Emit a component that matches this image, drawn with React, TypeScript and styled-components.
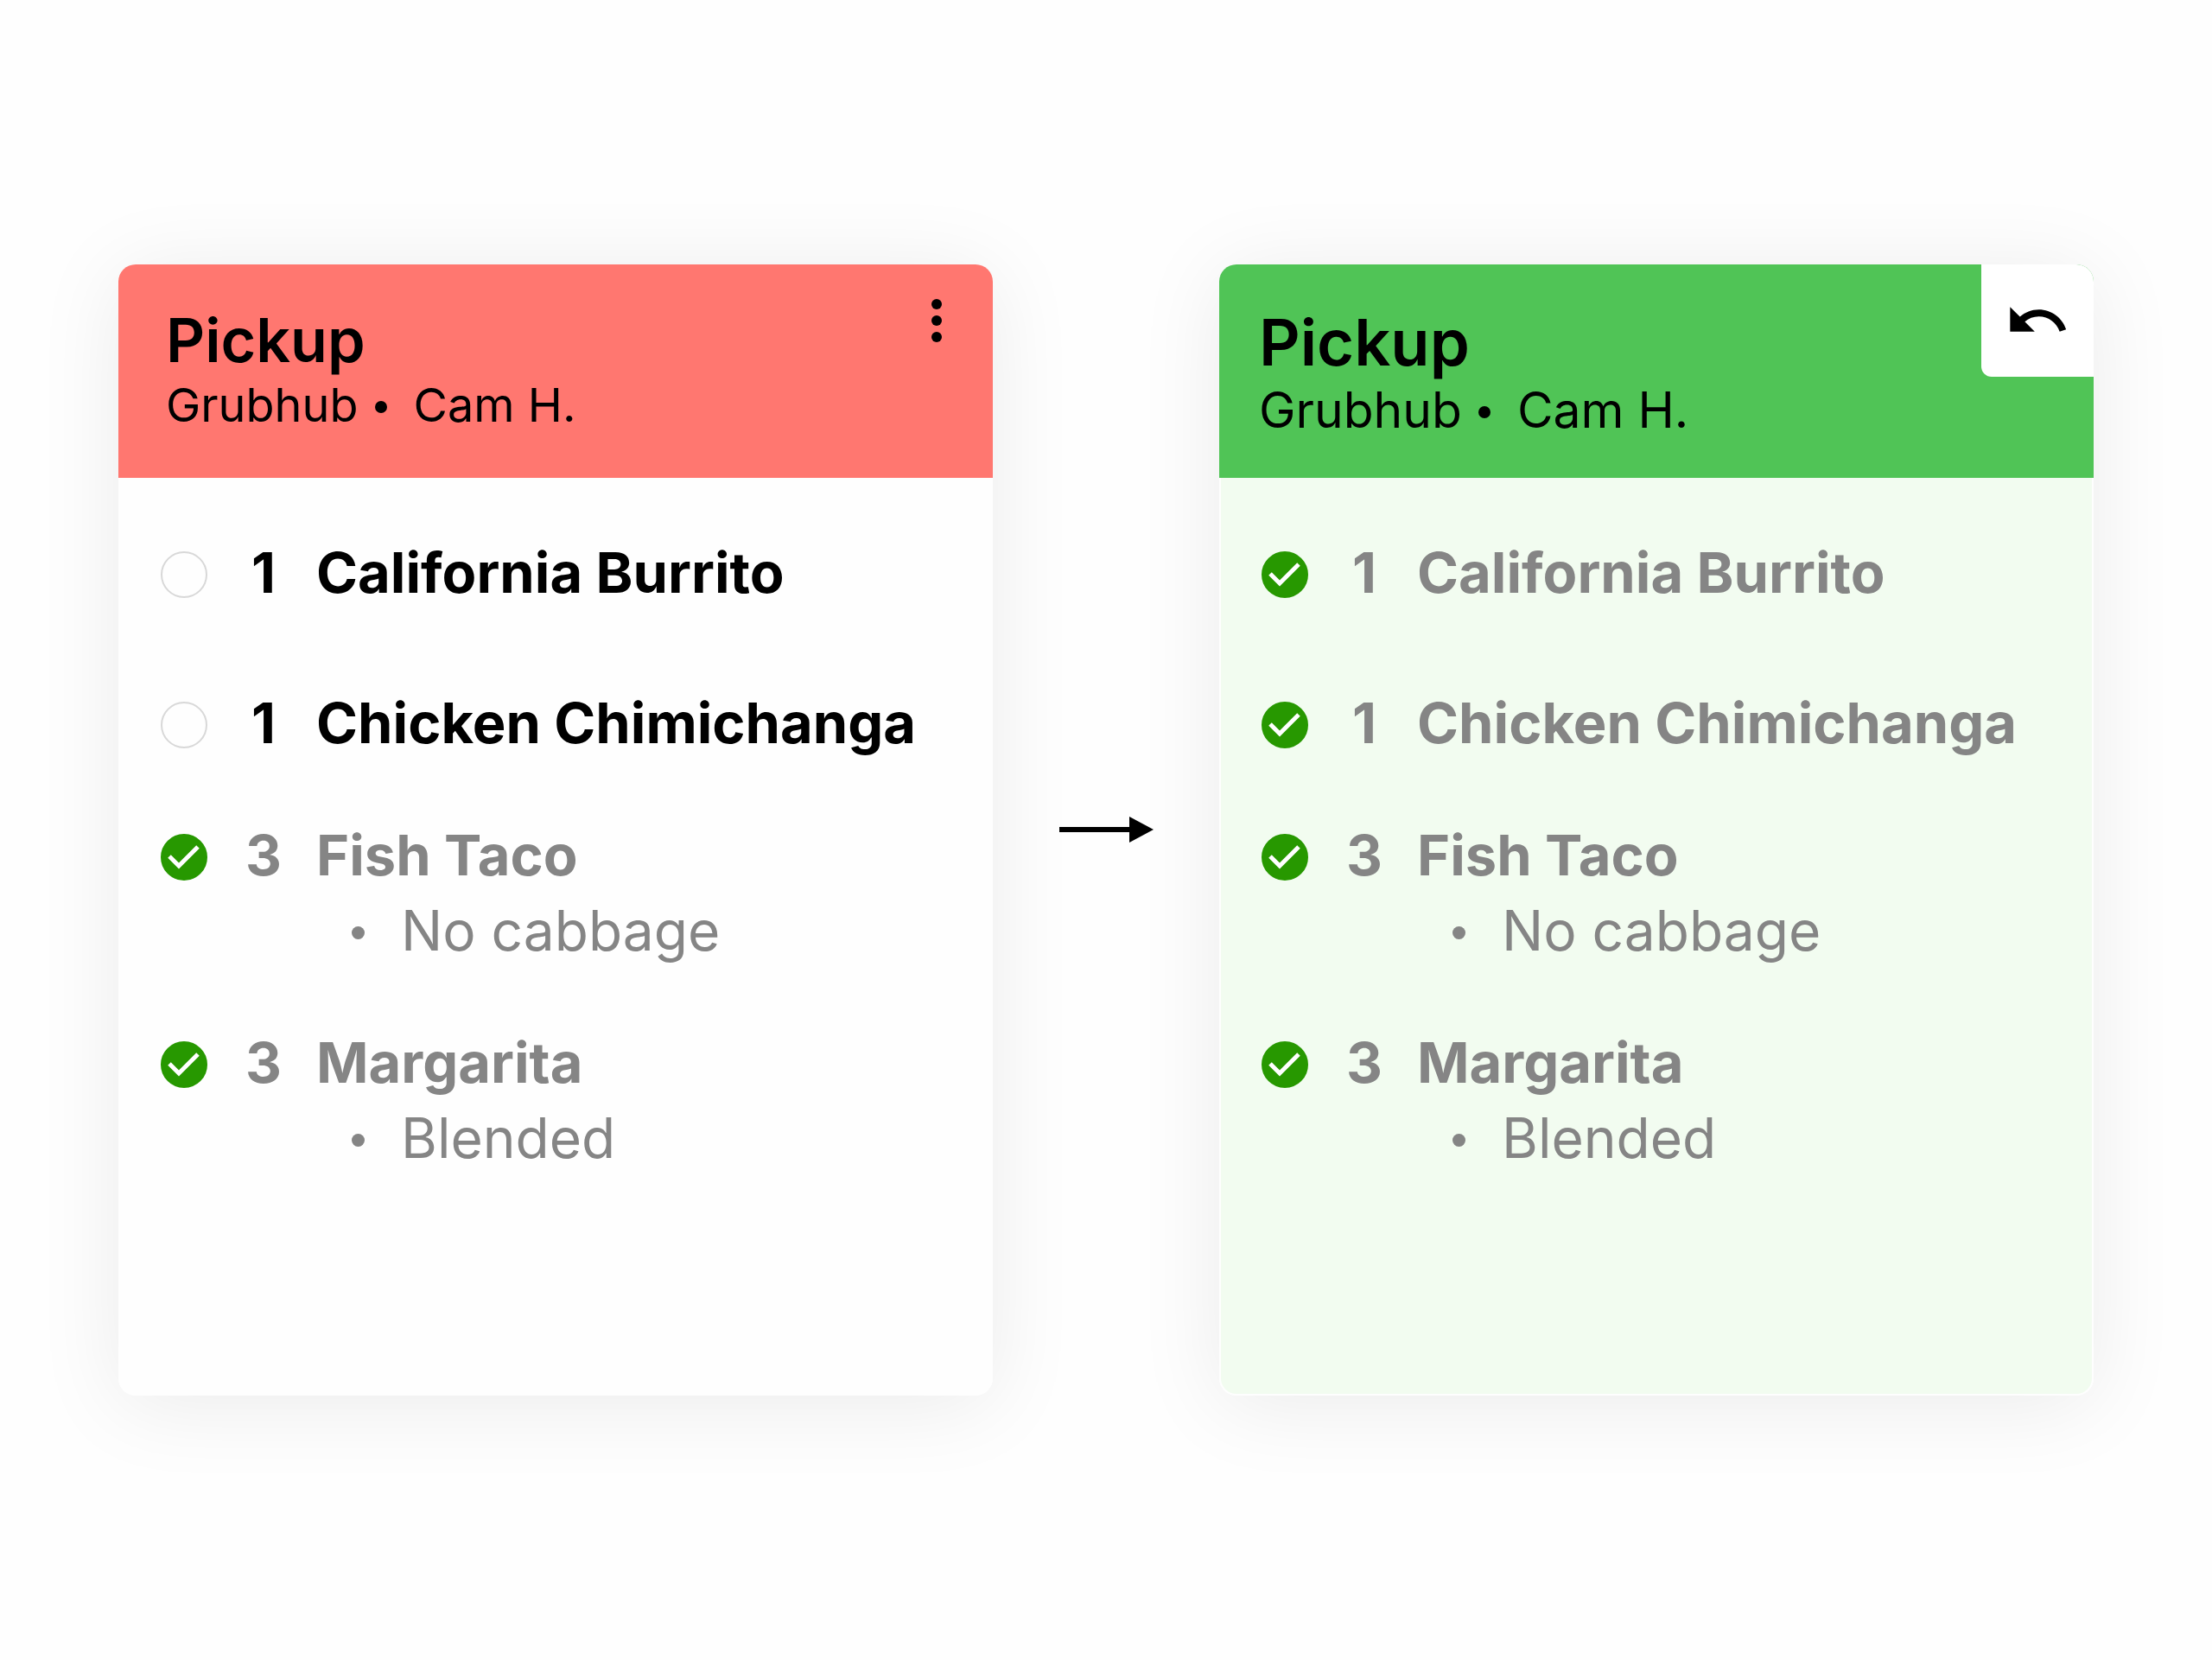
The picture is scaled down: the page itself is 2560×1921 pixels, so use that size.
import { useState } from "react";
import styled, { createGlobalStyle } from "styled-components";

const GlobalStyle = createGlobalStyle`
  *, *::before, *::after { box-sizing: border-box; }
  body {
    margin: 0;
    background: #fefefe;
    color: #000;
    font-family: Inter, "Liberation Sans", sans-serif;
  }
`;

const Page = styled.main`
  min-height: 100vh;
  padding: 64px 137px;
  display: flex;
  align-items: center;
`;

const Ticket = styled.article`
  flex: 1 1 0;
  min-width: 0;
  border-radius: 20px;
  background: #fefefe;
  box-shadow: 0 10px 100px rgba(0, 0, 0, 0.08);
  overflow: hidden;
`;

const Header = styled.header<{ $done: boolean }>`
  display: flex;
  justify-content: space-between;
  align-items: flex-start;
  height: 247px;
  padding-left: ${(p) => (p.$done ? 46 : 55)}px;
  background: ${(p) => (p.$done ? "#50c456" : "#ff7770")};
`;

const Heading = styled.div`
  padding-top: 48px;
`;

const Title = styled.h2<{ $large: boolean }>`
  margin: 0;
  font-size: ${(p) => (p.$large ? 74 : 70)}px;
  line-height: ${(p) => (p.$large ? 84 : 80)}px;
  font-weight: 600;
`;

const Source = styled.p<{ $large: boolean }>`
  display: flex;
  align-items: center;
  margin: 0;
  font-size: ${(p) => (p.$large ? 57 : 54)}px;
  line-height: ${(p) => (p.$large ? 74 : 70)}px;
  font-weight: 400;
`;

const Dot = styled.span`
  width: 14px;
  height: 14px;
  margin: 4px 31px 0 19px;
  border-radius: 50%;
  background: currentColor;
`;

const IconButton = styled.button<{ $filled: boolean }>`
  display: grid;
  place-items: center;
  width: 130px;
  height: 130px;
  padding: 0;
  border: 0;
  border-radius: 0 0 0 12px;
  background: ${(p) => (p.$filled ? "#fff" : "transparent")};
  color: #000;
  cursor: pointer;
`;

const Body = styled.div<{ $done: boolean }>`
  min-height: 1062px;
  padding: 66px 47px 0;
  border: 2px solid #fefefe;
  border-top: 0;
  border-radius: 0 0 20px 20px;
  background: ${(p) => (p.$done ? "#f2fcf0" : "#fefefe")};
`;

const Items = styled.ul`
  display: flex;
  flex-direction: column;
  margin: 0;
  padding: 0;
  list-style: none;
`;

const Item = styled.li<{ $roomy: boolean; $checked: boolean }>`
  margin-bottom: ${(p) => (p.$roomy ? 87 : 66)}px;
  color: ${(p) => (p.$checked ? "#858585" : "#000")};
`;

const ItemLabel = styled.label`
  display: grid;
  grid-template-columns: 54px 84px auto;
  column-gap: 21px;
  align-items: center;
  font-size: 65px;
  line-height: 87px;
  font-weight: 700;
  cursor: pointer;
`;

const CheckCell = styled.span`
  display: grid;
  margin-top: 4px;
`;

const CheckBox = styled.input`
  grid-area: 1 / 1;
  appearance: none;
  width: 54px;
  height: 54px;
  margin: 0;
  border: 2px solid #d8d8d8;
  border-radius: 50%;
  background: #fefefe;
  &:checked {
    border-color: #279800;
    background: #279800;
  }
`;

const CheckMark = styled.svg`
  grid-area: 1 / 1;
  width: 54px;
  height: 54px;
  pointer-events: none;
`;

const Quantity = styled.span`
  padding-left: 4px;
  text-align: center;
`;

const Name = styled.span`
  white-space: nowrap;
`;

const Modifiers = styled.ul`
  margin: 0;
  padding: 0 0 0 221px;
  list-style: none;
`;

const Modifier = styled.li`
  display: flex;
  align-items: center;
  gap: 42px;
  font-size: 64px;
  line-height: 87px;
  font-weight: 400;
  &::before {
    content: "";
    width: 15px;
    height: 15px;
    margin-top: 6px;
    border-radius: 50%;
    background: currentColor;
  }
`;

const Arrow = styled.svg`
  flex: none;
  width: 110px;
  height: 32px;
  margin: 0 76px;
`;

interface OrderItem {
  name: string;
  quantity: number;
  modifiers: string[];
  roomy: boolean;
  done: boolean;
}

const order: OrderItem[] = [
  { name: "California Burrito", quantity: 1, modifiers: [], roomy: true, done: false },
  { name: "Chicken Chimichanga", quantity: 1, modifiers: [], roomy: false, done: false },
  { name: "Fish Taco", quantity: 3, modifiers: ["No cabbage"], roomy: false, done: true },
  { name: "Margarita", quantity: 3, modifiers: ["Blended"], roomy: false, done: true },
];

function MoreIcon() {
  return (
    <svg width="76" height="76" viewBox="0 0 76 76" aria-hidden="true">
      <circle cx="38" cy="19" r="6" />
      <circle cx="38" cy="38" r="6" />
      <circle cx="38" cy="57" r="6" />
    </svg>
  );
}

function UndoIcon() {
  return (
    <svg width="76" height="76" viewBox="0 0 24 24" aria-hidden="true">
      <path d="M12.5 8c-2.65 0-5.05.99-6.9 2.6L2 7v9h9l-3.62-3.62c1.39-1.16 3.16-1.88 5.12-1.88 3.54 0 6.55 2.31 7.6 5.5l2.37-.78C21.08 11.03 17.15 8 12.5 8z" />
    </svg>
  );
}

function OrderTicket({ completed }: { completed: boolean }) {
  const [checked, setChecked] = useState(order.map((item) => completed || item.done));
  const toggle = (index: number) =>
    setChecked((all) => all.map((value, i) => (i === index ? !value : value)));

  return (
    <Ticket>
      <Header $done={completed}>
        <Heading>
          <Title $large={completed}>Pickup</Title>
          <Source $large={completed}>
            Grubhub
            <Dot />
            Cam H.
          </Source>
        </Heading>
        <IconButton type="button" $filled={completed} aria-label={completed ? "Undo" : "More options"}>
          {completed ? <UndoIcon /> : <MoreIcon />}
        </IconButton>
      </Header>
      <Body $done={completed}>
        <Items>
          {order.map((item, index) => (
            <Item key={item.name} $roomy={item.roomy} $checked={checked[index]}>
              <ItemLabel>
                <CheckCell>
                  <CheckBox type="checkbox" checked={checked[index]} onChange={() => toggle(index)} />
                  {checked[index] && (
                    <CheckMark viewBox="0 0 54 54" aria-hidden="true">
                      <path d="M10 26 21 37 43 15" fill="none" stroke="#fff" strokeWidth="5" />
                    </CheckMark>
                  )}
                </CheckCell>
                <Quantity>{item.quantity}</Quantity>
                <Name>{item.name}</Name>
              </ItemLabel>
              {item.modifiers.length > 0 && (
                <Modifiers>
                  {item.modifiers.map((modifier) => (
                    <Modifier key={modifier}>{modifier}</Modifier>
                  ))}
                </Modifiers>
              )}
            </Item>
          ))}
        </Items>
      </Body>
    </Ticket>
  );
}

export default function App() {
  return (
    <>
      <GlobalStyle />
      <Page>
        <OrderTicket completed={false} />
        <Arrow viewBox="0 0 110 32" aria-hidden="true">
          <path d="M82 0 110 15 82 30z" />
          <path d="M1 15h84" stroke="#000" strokeWidth="6" />
        </Arrow>
        <OrderTicket completed />
      </Page>
    </>
  );
}
